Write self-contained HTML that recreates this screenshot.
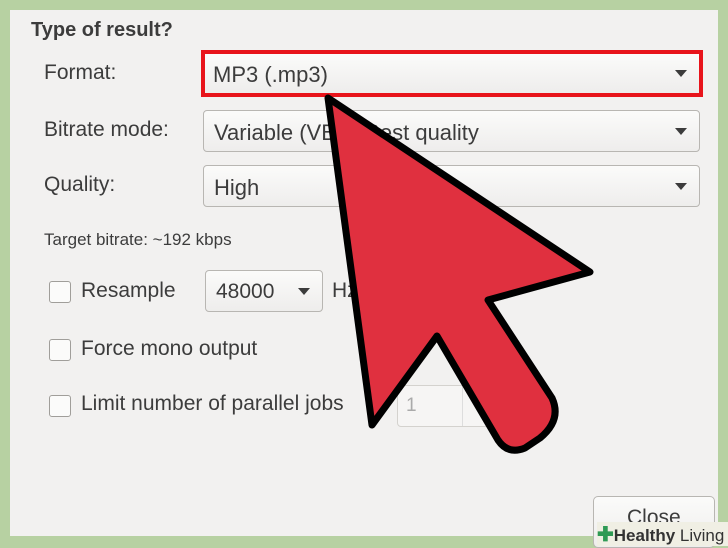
<!DOCTYPE html>
<html><head><style>
body{margin:0;width:728px;height:546px;background:#b7d1a2;position:relative;overflow:hidden;font-family:"Liberation Sans",sans-serif;color:#3c3c3c}
.p{position:absolute;left:10px;top:10px;width:708px;height:526px;background:#f2f1f0}
.a{position:absolute;white-space:nowrap}
.t{font-size:21px}
.dd{position:absolute;left:203px;width:497px;height:38px;border:1px solid #b8b6b2;border-radius:4px;background:linear-gradient(#fbfbfa,#eeedec);box-sizing:border-box}
.dd span{position:absolute;left:10px;top:7px;font-size:21px;white-space:nowrap}
.tri{position:absolute;width:0;height:0;border-left:6px solid transparent;border-right:6px solid transparent;border-top:7px solid #3c3c3c}
.cb{position:absolute;left:49px;width:20px;height:20px;border:1px solid #a09e9a;border-radius:3px;background:#fbfbfa}
</style></head><body>
<div class="p"></div>
<div class="a" style="left:31px;top:19px;font-size:20px;font-weight:bold">Type of result?</div>
<div class="a t" style="left:44px;top:61px">Format:</div>
<div class="dd" style="top:50px;left:201px;width:502px;height:47px;border:4px solid #e8141b;border-radius:0"><span style="top:8px;left:8px;font-size:22px">MP3 (.mp3)</span><div class="tri" style="right:12px;top:16px"></div></div>
<div class="a t" style="left:44px;top:118px">Bitrate mode:</div>
<div class="dd" style="top:110px;height:42px"><span style="top:9px;font-size:22px">Variable (VBR) Best quality</span><div class="tri" style="right:12px;top:17px"></div></div>
<div class="a t" style="left:44px;top:173px">Quality:</div>
<div class="dd" style="top:165px;height:42px"><span style="top:9px;font-size:22px">High</span><div class="tri" style="right:12px;top:17px"></div></div>
<div class="a" style="left:44px;top:230px;font-size:17px">Target bitrate: ~192 kbps</div>
<div class="cb" style="top:281px"></div><div class="a t" style="left:81px;top:279px">Resample</div>
<div class="dd" style="left:205px;top:270px;width:118px;height:42px"><span style="top:9px">48000</span><div class="tri" style="right:12px;top:17px"></div></div>
<div class="a t" style="left:332px;top:279px">Hz</div>
<div class="cb" style="top:339px"></div><div class="a t" style="left:81px;top:337px">Force mono output</div>
<div class="cb" style="top:395px"></div><div class="a t" style="left:81px;top:392px">Limit number of parallel jobs</div>
<div class="a" style="left:397px;top:385px;width:100px;height:40px;border:1px solid #d4d2ce;border-radius:4px;background:#f6f5f4"><span style="position:absolute;left:8px;top:9px;font-size:19px;color:#aaa">1</span><div style="position:absolute;left:64px;top:0;width:1px;height:40px;background:#ddd"></div></div>
<div class="a" style="left:593px;top:496px;width:120px;height:50px;border:1px solid #b8b6b2;border-radius:5px;background:linear-gradient(#fbfbfa,#eeedec)"><span style="position:absolute;left:33px;top:9px;font-size:21px">Close</span></div>
<div class="a" style="left:597px;top:522px;width:131px;height:24px;background:#f0efe4;font-size:17px;color:#333"><span style="color:#2e9a55;font-weight:bold;font-size:20px">✚</span><b>Healthy</b> Living</div>
<svg class="a" style="left:0;top:0" width="728" height="546"><path d="M328 98 L590 272 L488 300 L552 398 Q562 420 540 438 L525 448 Q508 455 498 440 L437 336 L372 425 Z" fill="#e0303f" stroke="#000" stroke-width="7" stroke-linejoin="round"/></svg>
</body></html>
